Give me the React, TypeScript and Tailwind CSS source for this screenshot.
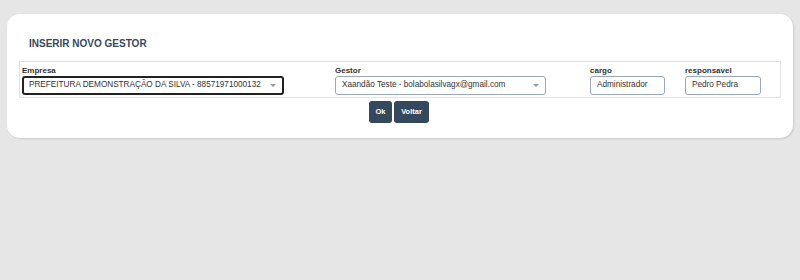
function Caret() {
  return (
    <svg width="6" height="3" viewBox="0 0 6 3" className="shrink-0">
      <path d="M0 0h6L3 3z" fill="#999" />
    </svg>
  )
}

export default function App() {
  return (
    <div
      className="w-[800px] h-[280px] bg-[#e6e6e6] pt-[14px] px-[7px]"
      style={{ fontFamily: '"Liberation Sans", Arial, sans-serif' }}
    >
      <div className="bg-white rounded-[13px] h-[124px] pt-[23px] px-[12px] shadow-[1px_1px_2px_rgba(0,0,0,0.12)]">
        <h1 className="ml-[10px] text-[10px] font-bold text-[#34495e] leading-[14px]">INSERIR NOVO GESTOR</h1>

        <div className="mt-[10px] border border-[#e3e3e3] h-[37px] grid grid-cols-[313px_255px_95px_1fr] pl-[2px] pt-[4px] whitespace-nowrap">
          <div>
            <div className="text-[8px] font-bold text-[#333] leading-[9px]">Empresa</div>
            <div className="mt-[1px] w-[262px] h-[19px] border-2 border-[#222] rounded-[3px] flex items-center justify-between pl-[5px] pr-[6px]">
              <span className="text-[8.2px] text-[#333] leading-none">PREFEITURA DEMONSTRAÇÃO DA SILVA - 88571971000132</span>
              <Caret />
            </div>
          </div>
          <div>
            <div className="text-[8px] font-bold text-[#333] leading-[9px]">Gestor</div>
            <div className="mt-[1px] w-[211px] h-[19px] border border-[#9aa7b6] rounded-[3px] flex items-center justify-between pl-[6px] pr-[6px]">
              <span className="text-[8.2px] text-[#333] leading-none">Xaandão Teste - bolabolasilvagx@gmail.com</span>
              <Caret />
            </div>
          </div>
          <div>
            <div className="text-[8px] font-bold text-[#333] leading-[9px]">cargo</div>
            <div className="mt-[1px] w-[75px] h-[19px] border border-[#9aa7b6] rounded-[3px] flex items-center pl-[6px]">
              <span className="text-[8.2px] text-[#333] leading-none">Administrador</span>
            </div>
          </div>
          <div>
            <div className="text-[8px] font-bold text-[#333] leading-[9px]">responsavel</div>
            <div className="mt-[1px] w-[76px] h-[19px] border border-[#9aa7b6] rounded-[3px] flex items-center pl-[6px]">
              <span className="text-[8.2px] text-[#333] leading-none">Pedro Pedra</span>
            </div>
          </div>
        </div>

        <div className="flex justify-center gap-[2px] mt-[3px] pr-[2px]">
          <button className="h-[22px] w-[23px] rounded-[3px] bg-[#34495e] text-white text-[7.5px] font-bold">Ok</button>
          <button className="h-[22px] w-[35px] rounded-[3px] bg-[#34495e] text-white text-[7.5px] font-bold">Voltar</button>
        </div>
      </div>
    </div>
  )
}
